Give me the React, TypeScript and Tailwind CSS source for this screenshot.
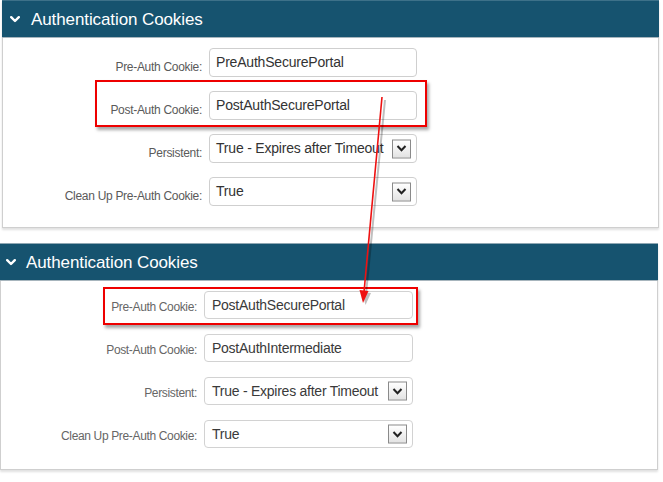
import React from 'react';

type Row = {
  label: string;
  value: string;
  select?: boolean;
  highlight?: boolean;
};

const topRows: Row[] = [
  { label: 'Pre-Auth Cookie:', value: 'PreAuthSecurePortal' },
  { label: 'Post-Auth Cookie:', value: 'PostAuthSecurePortal', highlight: true },
  { label: 'Persistent:', value: 'True - Expires after Timeout', select: true },
  { label: 'Clean Up Pre-Auth Cookie:', value: 'True', select: true },
];

const bottomRows: Row[] = [
  { label: 'Pre-Auth Cookie:', value: 'PostAuthSecurePortal', highlight: true },
  { label: 'Post-Auth Cookie:', value: 'PostAuthIntermediate' },
  { label: 'Persistent:', value: 'True - Expires after Timeout', select: true },
  { label: 'Clean Up Pre-Auth Cookie:', value: 'True', select: true },
];

const Chevron = () => (
  <svg width="10" height="7" viewBox="0 0 10 7" className="shrink-0">
    <polyline points="1.2,1.2 5,5 8.8,1.2" fill="none" stroke="#ffffff" strokeWidth="2.4" strokeLinecap="round" strokeLinejoin="round" />
  </svg>
);

const DropButton = () => (
  <span className="absolute top-1/2 -translate-y-1/2 right-[5px] w-[19px] h-[19px] border border-[#8a8a8a] bg-gradient-to-b from-white to-[#e3e3e3] flex items-center justify-center">
    <svg width="11" height="8" viewBox="0 0 11 8">
      <polyline points="1.5,1.5 5.5,5.8 9.5,1.5" fill="none" stroke="#222" strokeWidth="2" strokeLinejoin="miter" />
    </svg>
  </span>
);

const Field = ({ row, variant }: { row: Row; variant: 'top' | 'bottom' }) => {
  const top = variant === 'top';
  return (
    <div className="relative flex items-center">
      {row.highlight && (
        <div
          className={
            top
              ? 'absolute left-[92px] w-[332px] top-[-11px] bottom-[-7px] border-2 border-[#ee0000] shadow-[2px_3px_3px_rgba(0,0,0,0.35)]'
              : 'absolute left-[102px] w-[315px] top-[-4px] bottom-[-6px] border-2 border-[#ee0000] shadow-[2px_3px_3px_rgba(0,0,0,0.35)]'
          }
        />
      )}
      <label
        className={
          top
            ? 'w-[199px] shrink-0 text-right pt-[9px] text-[12px] tracking-[-0.3px] text-[#5a5a5a]'
            : 'w-[196px] shrink-0 text-right pt-[3px] text-[12px] tracking-[-0.35px] text-[#666]'
        }
      >
        {row.label}
      </label>
      <div
        className={
          top
            ? 'relative ml-[7px] w-[208px] h-[29px] rounded-[4px] border border-[#cfcfcf] bg-white flex items-center pl-[6px] text-[14px] tracking-[-0.2px] text-[#333]'
            : 'relative ml-[7px] w-[209px] h-[28px] rounded-[4px] border border-[#d2d2d2] bg-white flex items-center pl-[7px] text-[14px] tracking-[-0.25px] text-[#3a3a3a]'
        }
      >
        <span className="whitespace-nowrap">{row.value}</span>
        {row.select && <DropButton />}
      </div>
    </div>
  );
};

const Panel = ({ rows, variant }: { rows: Row[]; variant: 'top' | 'bottom' }) => {
  const top = variant === 'top';
  return (
    <section
      className={
        top
          ? 'ml-[2px] w-[657px] border-x border-b border-[#cfcfcf] shadow-[0_2px_2px_rgba(0,0,0,0.12)] bg-white'
          : 'mt-[15px] w-[658px] border-x border-b border-[#cfcfcf] shadow-[0_2px_2px_rgba(0,0,0,0.12)] bg-white'
      }
    >
      <header
        className={
          top
            ? 'h-[38px] bg-[#16536f] border-t border-[#3d7189] border-b border-b-[#a7b5bd] flex items-center pl-[8px] gap-[11px] -mx-px'
            : 'h-[38px] bg-[#16536f] border-t border-[#8fa7b3] border-b border-b-[#a7b5bd] flex items-center pl-[6px] gap-[10px] -mx-px'
        }
      >
        <Chevron />
        <h2 className="text-white text-[17px] leading-none tracking-[-0.1px] pt-px">Authentication Cookies</h2>
      </header>
      <div className={top ? 'flex flex-col gap-[14px] pt-[10px] pb-[21px]' : 'flex flex-col gap-[15px] pt-[10px] pb-[21px]'}>
        {rows.map((r) => (
          <Field key={r.label} row={r} variant={variant} />
        ))}
      </div>
    </section>
  );
};

export default function App() {
  return (
    <div className="relative w-[663px] h-[482px] bg-white overflow-hidden" style={{ fontFamily: '"Liberation Sans", Arial, sans-serif' }}>
      <Panel rows={topRows} variant="top" />
      <Panel rows={bottomRows} variant="bottom" />

      {/* red annotation arrow */}
      <svg className="absolute inset-0 pointer-events-none" width="663" height="482" viewBox="0 0 663 482">
        <line x1="383" y1="98" x2="364" y2="292" stroke="rgba(0,0,0,0.25)" strokeWidth="2" transform="translate(2,2)" />
        <polygon points="360,290 369,291 363.5,303" fill="rgba(0,0,0,0.25)" transform="translate(2,2)" />
        <line x1="382" y1="97" x2="364" y2="292" stroke="#ee1111" strokeWidth="1.6" />
        <polygon points="359.5,290 368.5,291 363,303" fill="#ee1111" />
      </svg>
    </div>
  );
}
